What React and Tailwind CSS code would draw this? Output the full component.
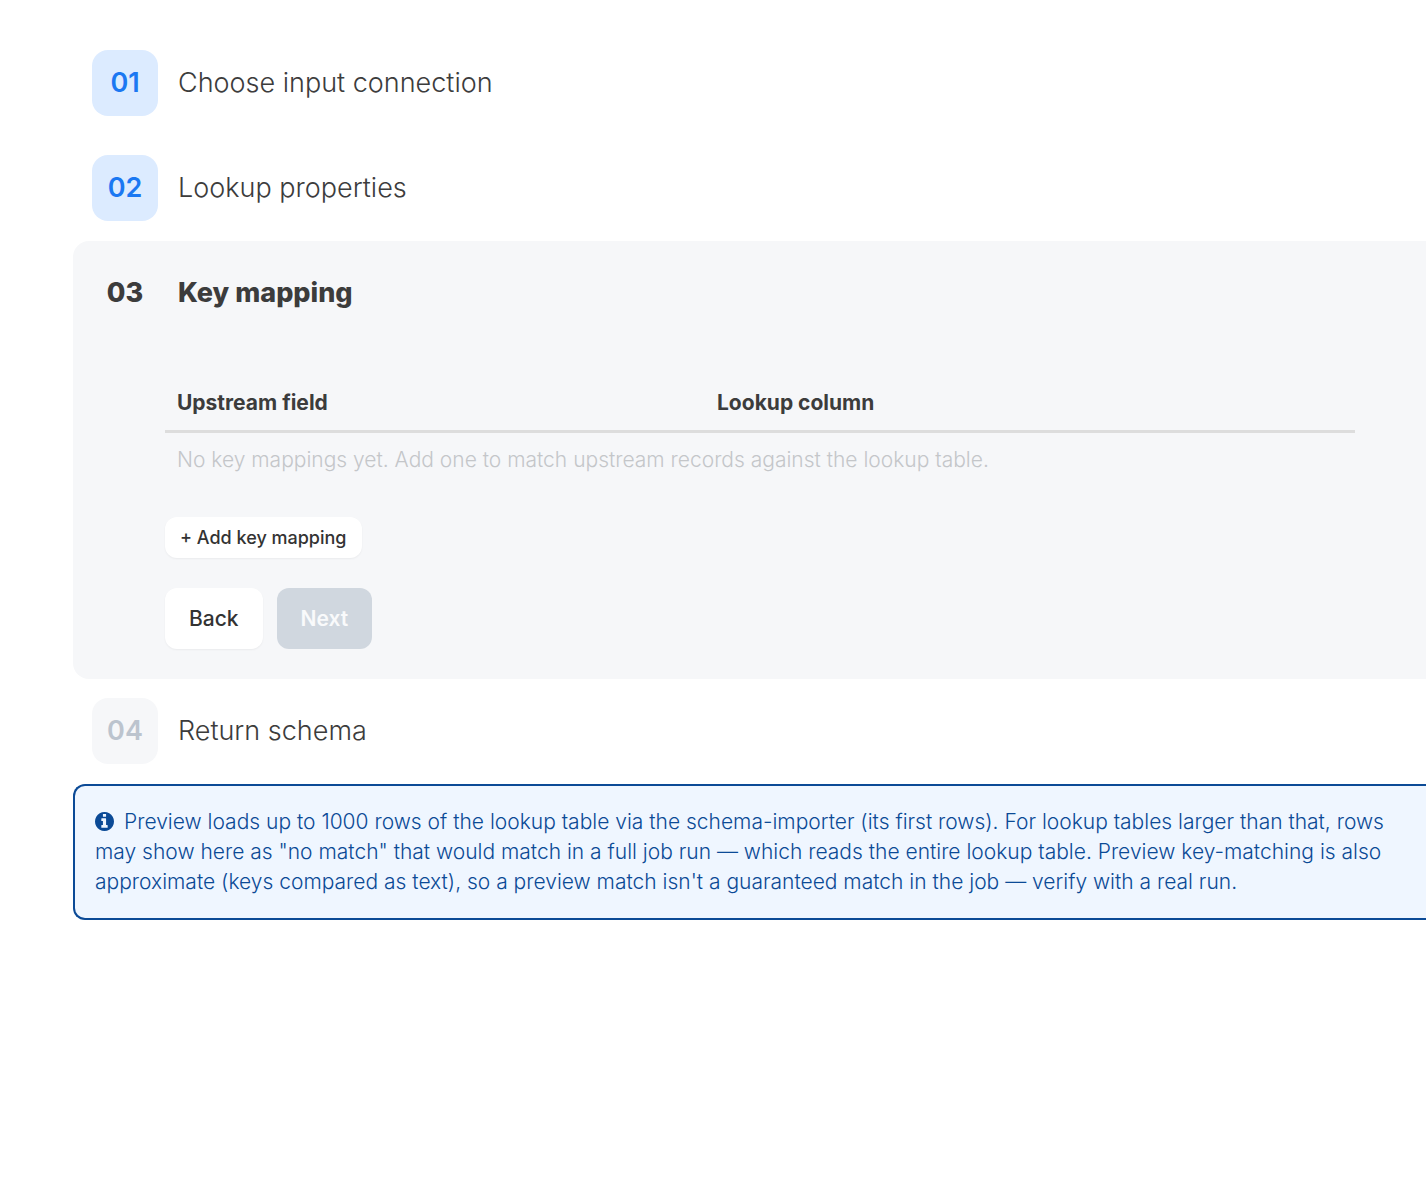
function InfoCircle({ className }) {
  return (
    <svg viewBox="128 128 1536 1536" fill="currentColor" className={className} aria-hidden="true">
      <path d="M1152 1376v-160q0-14-9-23t-23-9h-96v-512q0-14-9-23t-23-9h-320q-14 0-23 9t-9 23v160q0 14 9 23t23 9h96v320h-96q-14 0-23 9t-9 23v160q0 14 9 23t23 9h448q14 0 23-9t9-23zM1024 480v-160q0-14-9-23t-23-9h-192q-14 0-23 9t-9 23v160q0 14 9 23t23 9h192q14 0 23-9t9-23zM1664 896q0 209-103 385.5t-279.5 279.5-385.5 103-385.5-103-279.5-279.5-103-385.5 103-385.5 279.5-279.5 385.5-103 385.5 103 279.5 279.5 103 385.5z" />
    </svg>
  );
}

function Step({ number, title, state }) {
  const badge = {
    done: "bg-[#dcebff] text-[#1b78f2]",
    pending: "bg-[#f6f7f9] text-[#bcc4ce]",
  }[state];
  return (
    <div className="flex items-center gap-5 px-[19px]">
      <span className={`flex size-[66px] shrink-0 items-center justify-center rounded-2xl text-[27px] font-semibold ${badge}`}>
        {number}
      </span>
      <h2 className="text-[27px] font-light text-[#3c3c3c]">{title}</h2>
    </div>
  );
}

export default function App() {
  return (
    <main className="overflow-hidden bg-white pt-[50px] pl-[73px] font-['Inter',sans-serif] text-[#3c3c3c]">
      <div className="flex flex-col gap-[39px]">
        <Step number="01" title="Choose input connection" state="done" />
        <Step number="02" title="Lookup properties" state="done" />
      </div>

      <section className="mt-5 rounded-l-2xl bg-[#f6f7f9] pt-[19px] pb-[30px]">
        <div className="flex items-center gap-5 px-[19px]">
          <span className="flex size-[66px] items-center justify-center text-[27px] font-extrabold">03</span>
          <h2 className="text-[27px] font-extrabold">Key mapping</h2>
        </div>
        <div className="mt-[50px] mr-[71px] ml-[92px]">
          <table className="w-full table-fixed text-left text-[21px]">
            <thead>
              <tr className="h-[55px] border-b-[3px] border-[#dddddd]">
                <th className="w-[540px] px-3 font-bold">Upstream field</th>
                <th className="px-3 font-bold">Lookup column</th>
              </tr>
            </thead>
            <tbody>
              <tr className="h-[56px]">
                <td colSpan={2} className="px-3 font-light text-[#c4c6c9]">
                  No key mappings yet. Add one to match upstream records against the lookup table.
                </td>
              </tr>
            </tbody>
          </table>
          <button type="button" className="mt-[30px] flex h-[41px] items-center rounded-xl bg-white px-[15px] text-[18px] font-medium text-[#333333] shadow-xs">
            + Add key mapping
          </button>
          <div className="mt-[30px] flex gap-[14px]">
            <button type="button" className="h-[61px] rounded-xl bg-white px-6 text-[21px] font-medium text-[#333333] shadow-xs">
              Back
            </button>
            <button type="button" disabled className="h-[61px] rounded-xl bg-[#d0d7df] px-6 text-[21px] font-semibold text-[#f9fafb]">
              Next
            </button>
          </div>
        </div>
      </section>

      <div className="mt-[19px]">
        <Step number="04" title="Return schema" state="pending" />
      </div>

      <aside className="mt-5 rounded-l-xl border-2 border-r-0 border-[#0b4a96] bg-[#eff6ff] py-[21px] pr-[28px] pl-5 text-[21px] leading-[30px] font-light text-[#0b4a96]">
        <InfoCircle className="mr-[10px] inline size-[19px] align-[-2px]" />
        Preview loads up to 1000 rows of the lookup table via the schema-importer (its first rows). For lookup tables larger than that, rows may show here as "no match" that would match in a full job run — which reads the entire lookup table. Preview key-matching is also approximate (keys compared as text), so a preview match isn't a guaranteed match in the job — verify with a real run.
      </aside>
    </main>
  );
}
